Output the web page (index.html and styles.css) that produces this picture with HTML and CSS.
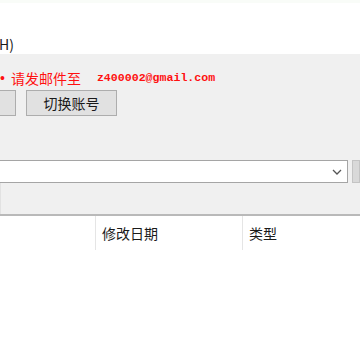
FILE: index.html
```html
<!DOCTYPE html>
<html lang="zh">
<head>
<meta charset="utf-8">
<link rel="stylesheet" href="styles.css">
</head>
<body>
<div class="menubar"><span class="menu-item">H)</span></div>
<div class="panel">
  <div class="notice">
    <span class="bullet">•</span>
    <span class="notice-text">请发邮件至</span>
    <span class="email">z400002@gmail.com</span>
  </div>
  <div class="buttons">
    <div class="btn btn-cut"></div>
    <div class="btn btn-switch">切换账号</div>
  </div>
  <div class="combo-row">
    <div class="combo">
      <svg class="chevron" width="10" height="6" viewBox="0 0 10 6"><path d="M1 1 L5 5 L9 1" fill="none" stroke="#555" stroke-width="1.3"/></svg>
    </div>
    <div class="combo-btn"></div>
  </div>
  <div class="toolbar-space"></div>
</div>
<div class="list">
  <div class="list-header">
    <div class="col col-name"></div>
    <div class="col col-date">修改日期</div>
    <div class="col col-type">类型</div>
  </div>
</div>
</body>
</html>
```

FILE: styles.css
```css
html, body {
  margin: 0;
  padding: 0;
  width: 360px;
  height: 360px;
  overflow: hidden;
  background: #ffffff;
  font-family: "Noto Sans CJK SC", "Noto Sans", sans-serif;
  color: #1a1a1a;
}
.menubar {
  height: 54px;
  box-sizing: border-box;
  padding-top: 32px;
  background: #ffffff;
  border-top: 3px solid #f9fcf8;
}
.menu-item {
  display: block;
  font-size: 14px;
  line-height: 18px;
  margin-left: -1px;
}
.panel {
  background: #f0f0f0;
  height: 162px;
  display: flex;
  flex-direction: column;
  border-bottom: 2px solid #b9b9b9;
  box-sizing: border-box;
}
.notice {
  margin-top: 15px;
  height: 18px;
  display: flex;
  align-items: center;
  color: #ff1010;
  white-space: nowrap;
}
.bullet {
  font-family: "Liberation Sans", sans-serif;
  font-size: 14px;
  line-height: 18px;
  margin-left: 0;
}
.notice-text {
  font-size: 14px;
  line-height: 18px;
  margin-left: 6px;
}
.email {
  font-family: "Liberation Mono", monospace;
  font-weight: bold;
  font-size: 11.6px;
  margin-left: 16px;
  margin-top: -2px;
}
.buttons {
  margin-top: 3px;
  height: 26px;
  display: flex;
}
.btn {
  box-sizing: border-box;
  height: 26px;
  border: 1px solid #adadad;
  background: #e1e1e1;
  font-size: 14px;
  line-height: 24px;
  text-align: center;
}
.btn-cut {
  margin-left: -60px;
  width: 76px;
}
.btn-switch {
  margin-left: 10px;
  width: 91px;
}
.combo-row {
  margin-top: 44px;
  height: 23px;
  display: flex;
}
.combo {
  box-sizing: border-box;
  margin-left: -2px;
  width: 350px;
  height: 23px;
  background: #ffffff;
  border: 1px solid #a5a5a5;
  display: flex;
  align-items: center;
  justify-content: flex-end;
  padding-right: 5px;
}
.chevron {
  display: block;
}
.combo-btn {
  margin-left: 4px;
  flex: 1;
  height: 23px;
  background: #d9d9d9;
  border: 1px solid #c4c4c4;
  box-sizing: border-box;
}
.toolbar-space {
  flex: 1;
  border-left: 1px solid #e2e2e2;
}
.list {
  background: #ffffff;
}
.list-header {
  display: flex;
  height: 34px;
}
.col {
  box-sizing: border-box;
  font-size: 14px;
  line-height: 34px;
  padding-left: 6px;
  white-space: nowrap;
}
.col-name {
  width: 96px;
  border-right: 1px solid #e5e5e5;
}
.col-date {
  width: 147px;
  border-right: 1px solid #e5e5e5;
}
.col-type {
  flex: 1;
}
```
